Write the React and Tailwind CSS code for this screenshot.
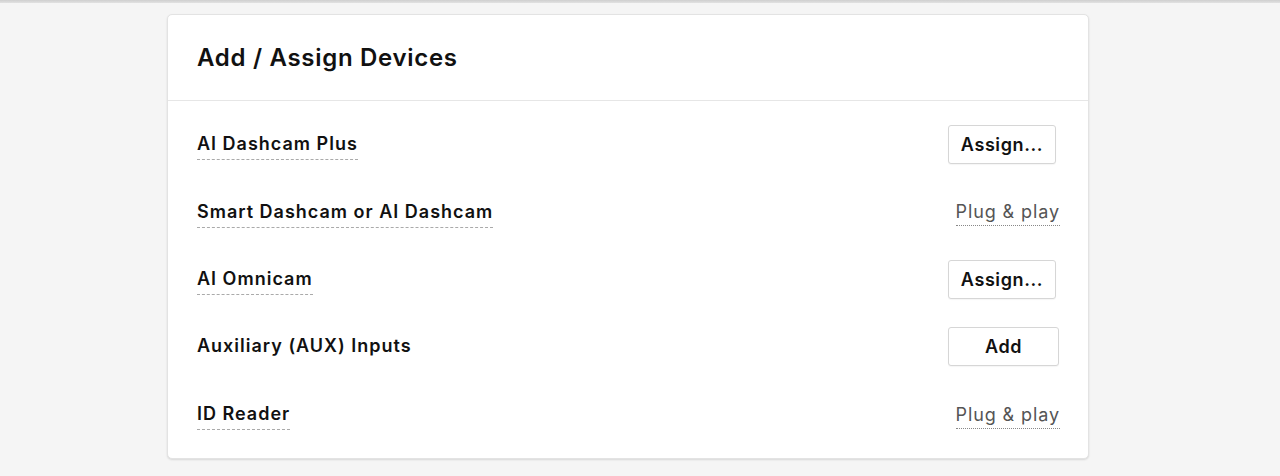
import React from 'react';

const devices = [
  { name: 'AI Dashcam Plus', action: 'assign', underline: true, h: 'h-[67px]' },
  { name: 'Smart Dashcam or AI Dashcam', action: 'plug', underline: true, h: 'h-[68px]' },
  { name: 'AI Omnicam', action: 'assign', underline: true, h: 'h-[66px]' },
  { name: 'Auxiliary (AUX) Inputs', action: 'add', underline: false, h: 'h-[68px]' },
  { name: 'ID Reader', action: 'plug', underline: true, h: 'h-[69px]' },
];

const ActionCell = ({ action }) => {
  if (action === 'plug') {
    return (
      <div className="w-[112px] flex justify-end">
        <span className="text-[18px] tracking-[0.9px] text-[#555] leading-[22px] border-b border-dotted border-[#888] pt-[3px] pb-[2px]">
          Plug &amp; play
        </span>
      </div>
    );
  }
  return (
    <div className="w-[112px] flex justify-start">
      <button
        className={`h-[39px] ${action === 'add' ? 'w-[111px]' : 'w-[108px]'} bg-white border border-[#d6d6d6] rounded-[3px] text-[18px] tracking-[0.6px] font-semibold text-[#111] shadow-[0_1px_1px_rgba(0,0,0,0.04)]`}
      >
        {action === 'add' ? 'Add' : 'Assign...'}
      </button>
    </div>
  );
};

const App = () => {
  return (
    <div className="min-h-[476px] bg-[#f5f5f5] font-['Inter',sans-serif]">
      <div className="h-[3px] bg-[linear-gradient(#cfcfcf,#e2e2e2)]" />
      <div className="pt-[11px] pl-[167px]">
        <div className="w-[922px] bg-white border border-[#e3e3e3] rounded-[5px] shadow-[0_1px_2px_rgba(0,0,0,0.12)]">
          <div className="h-[86px] pl-[29px] flex items-center border-b border-[#e6e6e6]">
            <h1 className="text-[24px] font-semibold text-[#111] tracking-[0.7px]">Add / Assign Devices</h1>
          </div>
          <div className="pl-[29px] pr-[28px] pt-[10px] pb-[9px]">
            {devices.map((d) => (
              <div key={d.name} className={`${d.h} flex items-center justify-between`}>
                <span
                  className={`text-[18px] tracking-[1px] font-semibold text-[#111] leading-[22px] pt-[4px] pb-[4px] ${d.underline ? 'border-b border-dashed border-[#aaa]' : 'border-b border-transparent'}`}
                >
                  {d.name}
                </span>
                <ActionCell action={d.action} />
              </div>
            ))}
          </div>
        </div>
      </div>
    </div>
  );
};

export default App;
